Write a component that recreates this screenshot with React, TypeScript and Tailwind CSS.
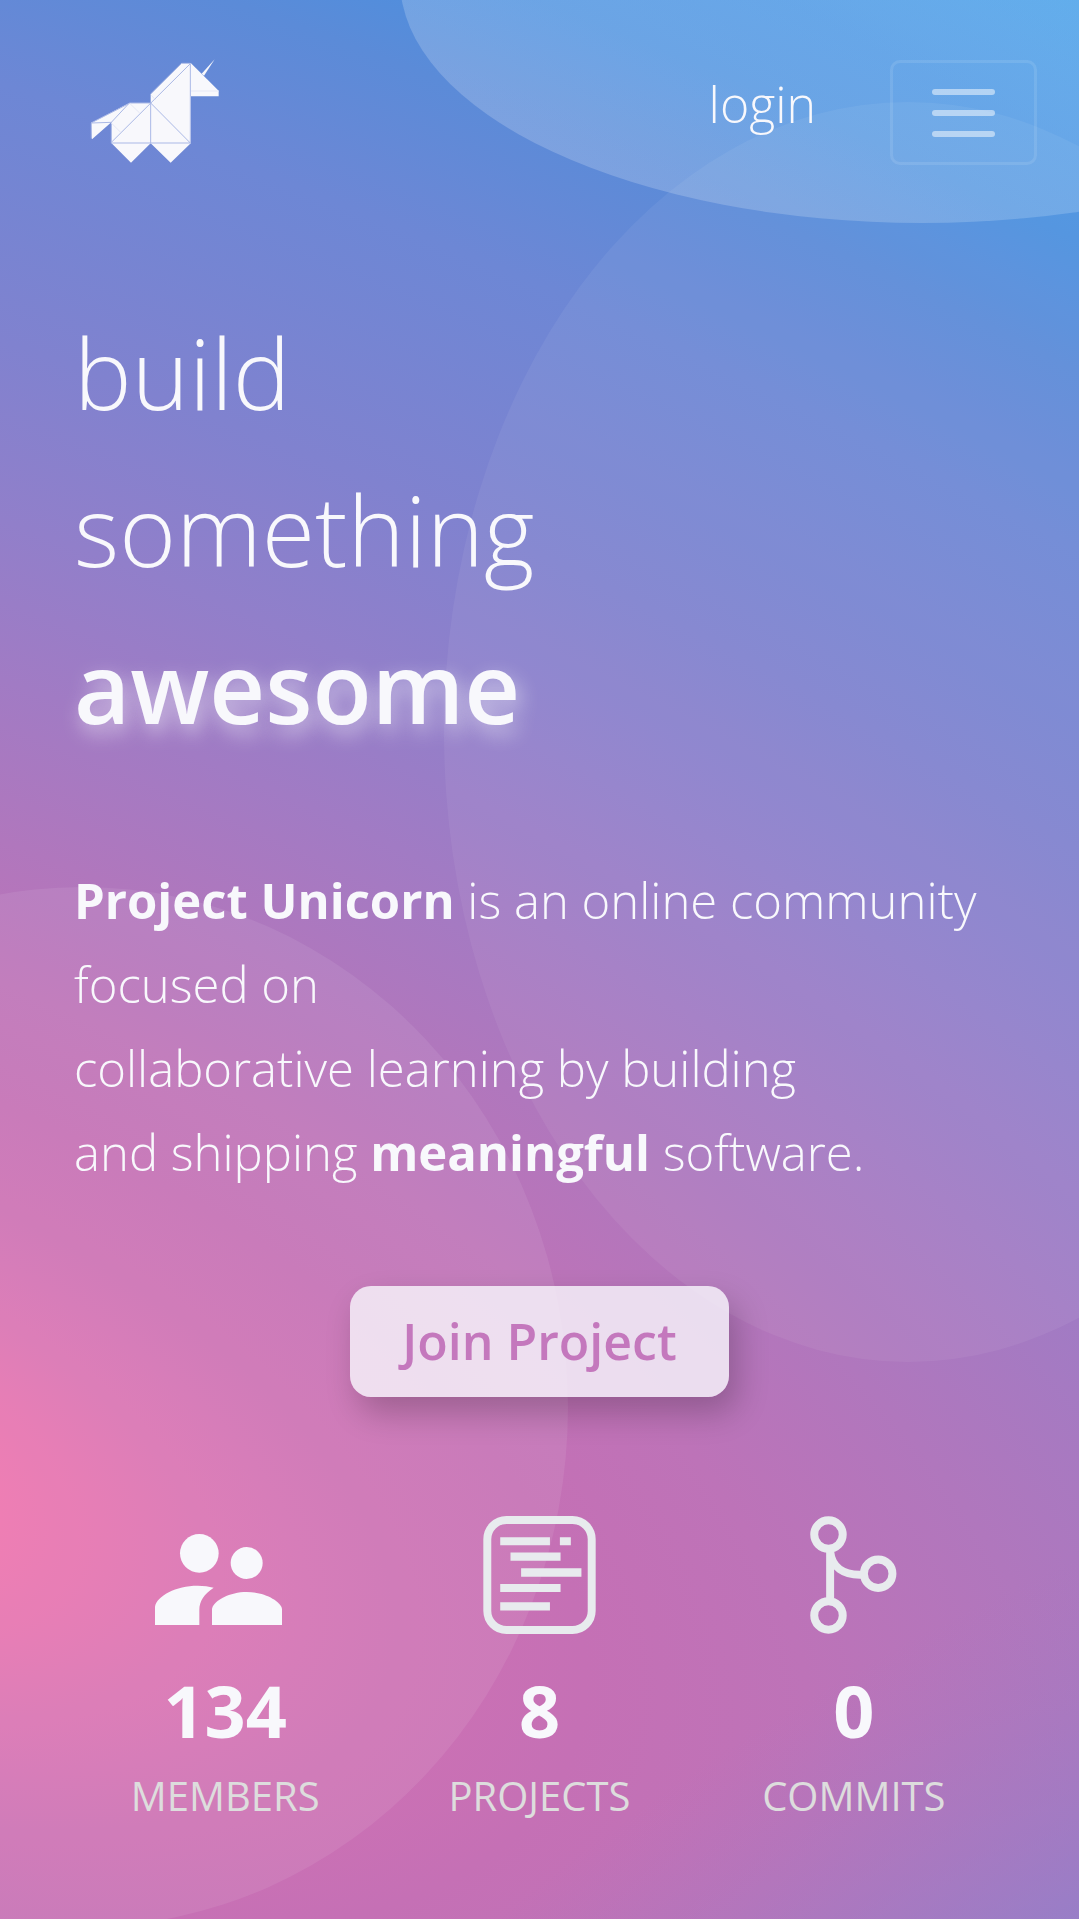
import React from "react";

function Backdrop() {
  return (
    <svg
      aria-hidden="true"
      viewBox="0 0 1079 1919"
      preserveAspectRatio="none"
      className="pointer-events-none absolute inset-0 h-full w-full"
    >
      <defs>
        <radialGradient
          id="sky"
          gradientUnits="userSpaceOnUse"
          cx="0"
          cy="0"
          r="1884"
          gradientTransform="translate(-245 1452) rotate(20) scale(2.1 1)"
        >
          <stop offset="0.065" stopColor="#ed73ae" />
          <stop offset="0.12" stopColor="#da73b2" />
          <stop offset="0.17" stopColor="#cd71b4" />
          <stop offset="0.22" stopColor="#c570b5" />
          <stop offset="0.28" stopColor="#bd73b8" />
          <stop offset="0.35" stopColor="#b077bd" />
          <stop offset="0.43" stopColor="#a17bc4" />
          <stop offset="0.51" stopColor="#917fca" />
          <stop offset="0.6" stopColor="#8082cf" />
          <stop offset="0.73" stopColor="#6d87d5" />
          <stop offset="0.81" stopColor="#5b8bd8" />
          <stop offset="0.87" stopColor="#4b90df" />
          <stop offset="1" stopColor="#459ce8" />
        </radialGradient>
        <radialGradient
          id="dusk"
          gradientUnits="userSpaceOnUse"
          cx="0"
          cy="0"
          r="400"
          gradientTransform="translate(1120 1980) rotate(-28) scale(2.6 1)"
        >
          <stop offset="0" stopColor="#8a82cd" stopOpacity="0.85" />
          <stop offset="1" stopColor="#a07bc4" stopOpacity="0" />
        </radialGradient>
        <linearGradient id="cloud" x1="0.2" y1="1" x2="0.85" y2="0.45">
          <stop offset="0" stopColor="#ffffff" stopOpacity="0.2" />
          <stop offset="0.5" stopColor="#e0f0ff" stopOpacity="0.2" />
          <stop offset="1" stopColor="#78d0f4" stopOpacity="0.35" />
        </linearGradient>
      </defs>
      <rect width="1079" height="1919" fill="url(#sky)" />
      <rect width="1079" height="1919" fill="url(#dusk)" />
      <ellipse cx="922" cy="-20" rx="522" ry="243" fill="url(#cloud)" />
      <ellipse cx="908" cy="732" rx="464" ry="630" fill="#ffffff" fillOpacity="0.06" />
      <ellipse cx="82" cy="1407" rx="486" ry="520" fill="#ffffff" fillOpacity="0.08" />
    </svg>
  );
}

function Unicorn() {
  return (
    <svg viewBox="90 58 390 312" className="h-[104px] w-[130px]" role="img" aria-label="Project Unicorn">
      <g fill="#f8f8fc">
        <path d="M425 102 464 59 432 108Z" />
        <path d="M393 71 476 153V170H393Z" />
        <path d="M93 250 208 190H272V163L365 70H393V310L332 369 272 311 213 369 154 310V248L96 299Z" />
      </g>
      <g fill="none" stroke="#aab8e6" strokeWidth="3">
        <path d="M272 163 365 71H391V310H154V248L208 190H272V310M391 72 154 308M272 190 391 310M93 250 154 248M94 250V297M93 250 208 191" />
        <path d="M393 154H476M210 192 239 220M154 250 182 278M274 167 286 180" stroke="#e6e8f5" />
      </g>
    </svg>
  );
}

function MembersIcon() {
  return (
    <svg aria-hidden="true" viewBox="75 132 381 273" className="h-[91px] w-[127px]" fill="#f8f8fc">
      <circle cx="208" cy="190" r="58" />
      <circle cx="350" cy="219" r="48" />
      <path d="M75 405V350C80 318 138 287 203 287Q230 287 251 293C222 312 208 333 208 360V405Z" />
      <path d="M246 405V356C252 331 300 306 350 306S450 331 456 356V405Z" />
    </svg>
  );
}

function ProjectsIcon() {
  return (
    <svg aria-hidden="true" viewBox="129 77 339 356" className="h-[118px] w-[113px]">
      <rect x="141" y="89" width="315" height="332" rx="58" fill="none" stroke="#e8ebee" strokeWidth="24" />
      <path
        fill="#e8ebee"
        d="M180 141H330V165H180ZM360 141H393V165H360ZM211 187H362V212H211ZM243 235H425V260H243ZM180 282H362V306H180ZM180 337H330V362H180Z"
      />
    </svg>
  );
}

function CommitsIcon() {
  return (
    <svg
      aria-hidden="true"
      viewBox="213 77 261 356"
      className="h-[118px] w-[87px]"
      fill="none"
      stroke="#e8ebee"
      strokeWidth="24"
    >
      <circle cx="268" cy="133" r="43" />
      <circle cx="418" cy="251" r="43" />
      <circle cx="268" cy="377" r="43" />
      <path d="M273 180V330M273 184C278 230 312 256 369 254" />
    </svg>
  );
}

const stats = [
  { label: "MEMBERS", value: 134, icon: <MembersIcon />, shift: "pr-3.5 pt-2" },
  { label: "PROJECTS", value: 8, icon: <ProjectsIcon />, shift: "" },
  { label: "COMMITS", value: 0, icon: <CommitsIcon />, shift: "" },
];

export default function App() {
  return (
    <div className="relative min-h-screen overflow-hidden font-['Open_Sans','Noto_Sans',sans-serif] text-[#f8f8fc]">
      <Backdrop />
      <div className="relative">
        <header className="flex items-start justify-between pt-[59px] pr-[42px] pl-[90px]">
          <a href="#home">
            <Unicorn />
          </a>
          <nav className="flex items-start gap-[74px]">
            <a href="#login" className="pt-[3px] text-[50px] leading-[84px] font-light">
              login
            </a>
            <button
              type="button"
              aria-label="Toggle navigation"
              className="mt-px flex h-[105px] w-[147px] flex-col items-center justify-center gap-[15px] rounded-[10px] border-[3px] border-white/10"
            >
              <span className="h-1.5 w-[63px] rounded-full bg-white/50" />
              <span className="h-1.5 w-[63px] rounded-full bg-white/50" />
              <span className="h-1.5 w-[63px] rounded-full bg-white/50" />
            </button>
          </nav>
        </header>

        <main className="px-[74px]">
          <h1 className="mt-[129px] text-[97px] font-light">
            <span className="block leading-[157px]">build</span>
            <span className="block leading-[157px]">something</span>
            <strong className="block leading-[157px] font-semibold [text-shadow:4px_8px_20px_rgba(248,248,252,0.6)]">
              awesome
            </strong>
          </h1>
          <p className="mt-[93px] text-[49px] leading-[84px] font-light">
            <strong className="font-bold">Project Unicorn</strong> is an online community focused on
            <br />
            collaborative learning by building
            <br />
            and shipping <strong className="font-bold">meaningful</strong> software.
          </p>
          <div className="mt-[92px] flex justify-center">
            <button
              type="button"
              className="h-[111px] rounded-[21px] bg-[#f8f8fc]/80 px-[52px] text-[50px] font-semibold text-[#c478bd] shadow-[8px_16px_32px_rgba(0,0,0,0.22)]"
            >
              Join Project
            </button>
          </div>
        </main>

        <section aria-label="Community stats" className="mt-[118px] grid grid-cols-3 px-[68px] pb-20">
          {stats.map((s) => (
            <div key={s.label} className="flex flex-col items-center">
              <div className={`flex h-[120px] items-center ${s.shift}`}>{s.icon}</div>
              <div className="mt-[21px] text-[72px] leading-[108px] font-bold">{s.value}</div>
              <div className="text-[40px] leading-[63px] text-[#dddddd]">{s.label}</div>
            </div>
          ))}
        </section>
      </div>
    </div>
  );
}
